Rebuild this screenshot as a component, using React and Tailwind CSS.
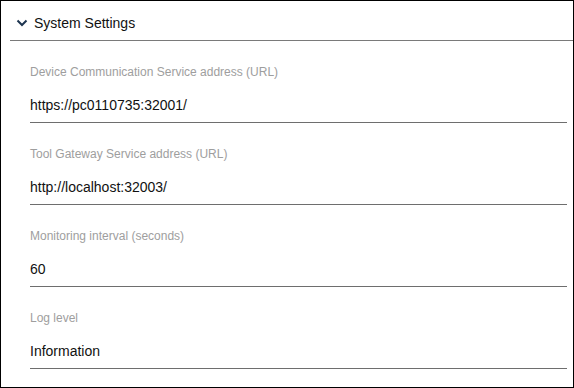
const fields = [
  { label: "Device Communication Service address (URL)", value: "https://pc0110735:32001/" },
  { label: "Tool Gateway Service address (URL)", value: "http://localhost:32003/" },
  { label: "Monitoring interval (seconds)", value: "60" },
  { label: "Log level", value: "Information" },
];

function Field({ label, value }) {
  return (
    <div className="ml-[29px] mr-[6px] border-b border-[#6e6e6e] pt-[23px] pb-[7px]">
      <div className="text-[12px] leading-[16px] text-[#9e9e9e]">{label}</div>
      <div className="mt-[15px] text-[14px] leading-[20px] text-[#111]">{value}</div>
    </div>
  );
}

export default function App() {
  return (
    <div
      className="w-[574px] h-[388px] bg-white border border-black overflow-hidden"
      style={{ fontFamily: '"Liberation Sans", Arial, sans-serif' }}
    >
      <div className="ml-[9px] h-[40px] border-b border-[#7a7a7a] flex items-start pt-[12px]">
        <svg
          className="ml-[6px] mt-[6px] w-[12px] h-[8px]"
          viewBox="0 0 12 8"
          fill="none"
          stroke="#1d3550"
          strokeWidth="2"
        >
          <path d="M1.5 1.5l4.5 4.5 4.5-4.5" />
        </svg>
        <span className="ml-[6px] text-[14px] leading-[20px] text-[#111]">System Settings</span>
      </div>
      {fields.map((f) => (
        <Field key={f.label} label={f.label} value={f.value} />
      ))}
    </div>
  );
}
